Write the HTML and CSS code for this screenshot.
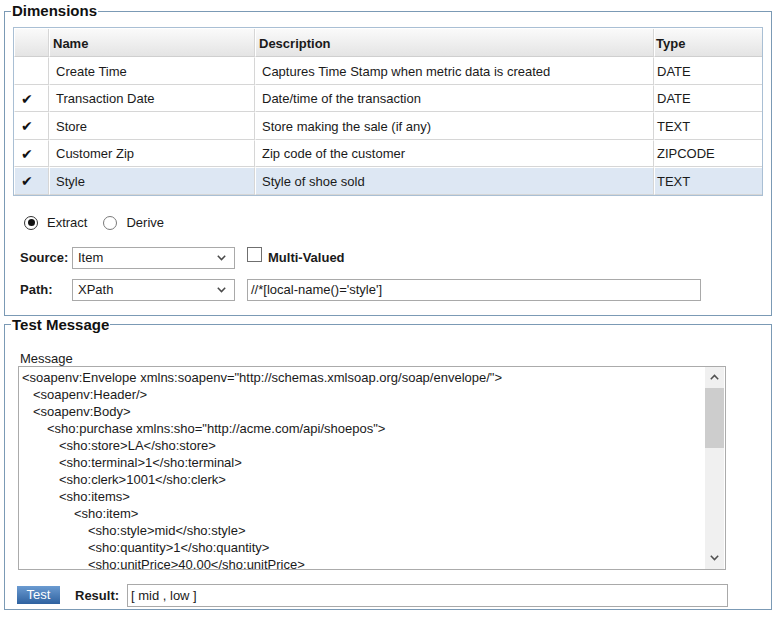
FILE: index.html
```html
<!DOCTYPE html>
<html>
<head>
<meta charset="utf-8">
<link rel="stylesheet" href="styles.css">
</head>
<body>
<fieldset class="panel dims">
  <legend>Dimensions</legend>
  <table class="grid">
    <colgroup><col class="c-chk"><col class="c-name"><col class="c-desc"><col></colgroup>
    <thead>
      <tr><th></th><th>Name</th><th>Description</th><th>Type</th></tr>
    </thead>
    <tbody>
      <tr><td class="chk"></td><td>Create Time</td><td>Captures Time Stamp when metric data is created</td><td>DATE</td></tr>
      <tr><td class="chk">✔</td><td>Transaction Date</td><td>Date/time of the transaction</td><td>DATE</td></tr>
      <tr><td class="chk">✔</td><td>Store</td><td>Store making the sale (if any)</td><td>TEXT</td></tr>
      <tr><td class="chk">✔</td><td>Customer Zip</td><td>Zip code of the customer</td><td>ZIPCODE</td></tr>
      <tr class="sel"><td class="chk">✔</td><td>Style</td><td>Style of shoe sold</td><td>TEXT</td></tr>
    </tbody>
  </table>

  <div class="radios">
    <span class="radio on"></span><span class="rlabel">Extract</span>
    <span class="radio"></span><span class="rlabel">Derive</span>
  </div>

  <div class="formrow first">
    <span class="flabel">Source:</span>
    <div class="select"><span>Item</span><svg width="9" height="6" viewBox="0 0 9 6"><polyline points="0.8,0.8 4.5,4.6 8.2,0.8" fill="none" stroke="#4a4a4a" stroke-width="1.5"/></svg></div>
    <span class="checkbox"></span><span class="cblabel">Multi-Valued</span>
  </div>
  <div class="formrow">
    <span class="flabel">Path:</span>
    <div class="select"><span>XPath</span><svg width="9" height="6" viewBox="0 0 9 6"><polyline points="0.8,0.8 4.5,4.6 8.2,0.8" fill="none" stroke="#4a4a4a" stroke-width="1.5"/></svg></div>
    <div class="input path">//*[local-name()='style']</div>
  </div>
</fieldset>

<fieldset class="panel test">
  <legend>Test Message</legend>
  <div class="msglabel">Message</div>
  <div class="msgbox">
    <div class="msgtext">
      <div class="ln">&lt;soapenv:Envelope xmlns:soapenv="http://schemas.xmlsoap.org/soap/envelope/"&gt;</div>
      <div class="ln i1">&lt;soapenv:Header/&gt;</div>
      <div class="ln i1">&lt;soapenv:Body&gt;</div>
      <div class="ln i2">&lt;sho:purchase xmlns:sho="http://acme.com/api/shoepos"&gt;</div>
      <div class="ln i3">&lt;sho:store&gt;LA&lt;/sho:store&gt;</div>
      <div class="ln i3">&lt;sho:terminal&gt;1&lt;/sho:terminal&gt;</div>
      <div class="ln i3">&lt;sho:clerk&gt;1001&lt;/sho:clerk&gt;</div>
      <div class="ln i3">&lt;sho:items&gt;</div>
      <div class="ln i4">&lt;sho:item&gt;</div>
      <div class="ln i5">&lt;sho:style&gt;mid&lt;/sho:style&gt;</div>
      <div class="ln i5">&lt;sho:quantity&gt;1&lt;/sho:quantity&gt;</div>
      <div class="ln i5">&lt;sho:unitPrice&gt;40.00&lt;/sho:unitPrice&gt;</div>
    </div>
    <div class="vscroll">
      <div class="arrow"><svg width="9" height="6" viewBox="0 0 9 6"><polyline points="0.8,5.2 4.5,1.4 8.2,5.2" fill="none" stroke="#505050" stroke-width="1.5"/></svg></div>
      <div class="thumb"></div>
      <div class="track"></div>
      <div class="arrow"><svg width="9" height="6" viewBox="0 0 9 6"><polyline points="0.8,0.8 4.5,4.6 8.2,0.8" fill="none" stroke="#505050" stroke-width="1.5"/></svg></div>
    </div>
  </div>
  <div class="resultrow">
    <span class="btn">Test</span>
    <span class="rlabel2">Result:</span>
    <div class="input result">[ mid , low ]</div>
  </div>
</fieldset>
</body>
</html>
```
FILE: styles.css
```css
* { box-sizing: border-box; }
body {
  margin: 0;
  font-family: "Liberation Sans", Arial, sans-serif;
  font-size: 13px;
  color: #1a1a1a;
  background: #fff;
}
.panel {
  margin: 0 3px 0 4px;
  padding: 0;
  border: 1px solid #7b9ab5;
  min-width: 0;
}
.panel legend {
  margin-left: -2px;
  padding: 0 1px;
  font-size: 15px;
  font-weight: bold;
  line-height: 18px;
  color: #111;
}
.dims { margin-top: 2px; padding: 7px 8px 14px 8px; }
.test { margin-top: 0; padding: 17px 8px 2px 8px; }

/* grid */
.grid {
  width: 750px;
  table-layout: fixed;
  border-collapse: separate;
  border-spacing: 0;
  border: 1px solid #a9bfd4;
  padding: 1px 0 0 0;
}
.c-chk { width: 35px; }
.c-name { width: 206px; }
.c-desc { width: 399px; }
.grid th {
  height: 28px;
  text-align: left;
  font-weight: bold;
  padding: 2px 3px 0 3px;
  background: linear-gradient(#fafafa, #e4e4e4);
  border-right: 1px solid #d6d6d6;
  border-left: 1px solid #fff;
  border-bottom: 1px solid #cfcfcf;
}
.grid td {
  height: 27.5px;
  padding: 1px 6px 0 6px;
  white-space: nowrap;
  overflow: hidden;
  border-right: 1px solid #d6d6d6;
  border-left: 1px solid #fff;
  border-bottom: 1px solid #d6d6d6;
  border-top: 1px solid #fff;
}
.grid th:last-child, .grid td:last-child { border-right: none; padding-left: 2px; }
.grid th:last-child { padding-left: 1px; }
.grid td.chk {
  padding: 1px 0 0 6px;
  font-family: "DejaVu Sans", sans-serif;
  font-size: 14px;
  color: #111;
}
.grid tr.sel td { background: #dde7f3; }

/* radios */
.radios {
  display: flex;
  align-items: center;
  height: 16px;
  margin: 19px 0 0 11px;
}
.radio {
  width: 14px;
  height: 14px;
  border: 1px solid #7a7a7a;
  border-radius: 50%;
  background: #fff;
  display: flex;
  align-items: center;
  justify-content: center;
}
.radio.on { border-color: #333; }
.radio.on::after {
  content: "";
  width: 7px;
  height: 7px;
  border-radius: 50%;
  background: #111;
}
.rlabel { margin-left: 9px; margin-right: 16px; }

/* form rows */
.formrow {
  display: flex;
  align-items: center;
  height: 22px;
  margin: 10px 0 0 7px;
}
.formrow.first { margin-top: 16px; }
.flabel { width: 52px; font-weight: bold; }
.select {
  width: 163px;
  height: 22px;
  border: 1px solid #a9a9a9;
  display: flex;
  align-items: center;
  justify-content: space-between;
  padding: 0 8px 0 5px;
  background: #fff;
}
.checkbox {
  width: 15px;
  height: 15px;
  border: 1px solid #6f6f6f;
  margin-left: 12px;
  align-self: flex-start;
  margin-top: 0;
}
.cblabel { margin-left: 6px; font-weight: bold; }
.input {
  height: 22px;
  border: 1px solid #a9a9a9;
  padding: 0 3px;
  display: flex;
  align-items: center;
  white-space: nowrap;
}
.input.path { width: 454px; margin-left: 12px; }

/* message */
.msglabel { line-height: 15px; margin-left: 7px; }
.msgbox {
  display: flex;
  width: 708px;
  height: 204px;
  margin-left: 5px;
  border: 1px solid #ababab;
}
.msgtext {
  flex: 1;
  overflow: hidden;
  padding: 2px 0 0 3px;
}
.ln { line-height: 17px; height: 17px; white-space: nowrap; }
.i1 { padding-left: 11px; }
.i2 { padding-left: 25px; }
.i3 { padding-left: 37px; }
.i4 { padding-left: 52px; }
.i5 { padding-left: 66px; }
.vscroll {
  width: 19px;
  display: flex;
  flex-direction: column;
  background: #f0f0f0;
  margin-right: 1px;
}
.arrow {
  height: 21px;
  display: flex;
  align-items: center;
  justify-content: center;
}
.thumb { height: 60px; background: #cdcdcd; }
.track { flex: 1; }

.resultrow {
  display: flex;
  align-items: center;
  height: 23px;
  margin-top: 14px;
}
.btn {
  width: 43px;
  height: 18px;
  margin-left: 4px;
  background: linear-gradient(#6b9bd1, #2f62a0);
  color: #fff;
  text-align: center;
  line-height: 18px;
}
.rlabel2 { font-weight: bold; margin-left: 15px; width: 52px; }
.input.result { width: 601px; height: 23px; }
```
